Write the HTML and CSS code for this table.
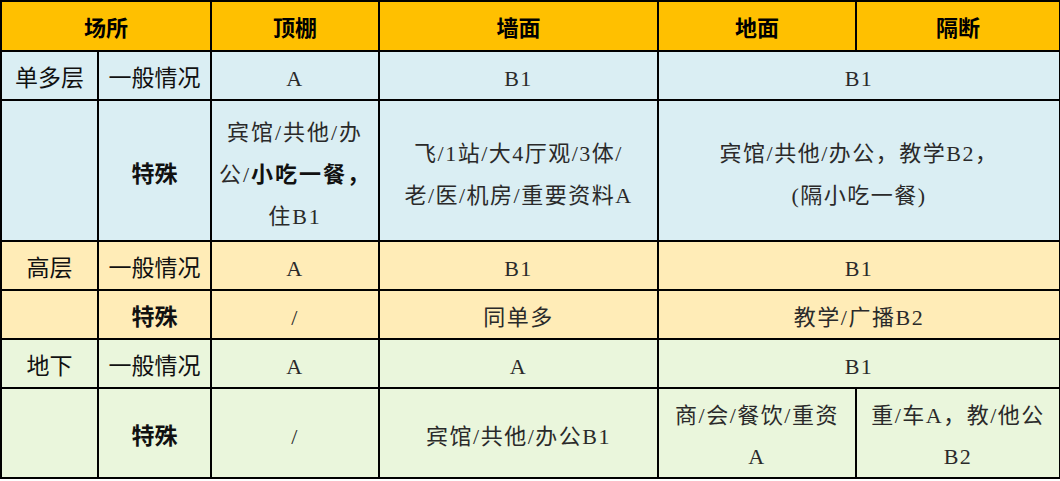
FILE: index.html
```html
<!DOCTYPE html>
<html lang="zh-CN">
<head>
<meta charset="utf-8">
<title>装修材料燃烧性能等级</title>
<link rel="stylesheet" href="styles.css">
</head>
<body>
<table class="grid">
  <colgroup>
    <col class="c1"><col class="c2"><col class="c3"><col class="c4"><col class="c5"><col class="c6">
  </colgroup>
  <thead>
    <tr class="head">
      <th colspan="2">场所</th>
      <th>顶棚</th>
      <th>墙面</th>
      <th>地面</th>
      <th>隔断</th>
    </tr>
  </thead>
  <tbody>
    <tr class="blue r-short">
      <td class="label">单多层</td>
      <td class="label">一般情况</td>
      <td>A</td>
      <td>B1</td>
      <td colspan="2">B1</td>
    </tr>
    <tr class="blue r-tall">
      <td></td>
      <td class="label bold">特殊</td>
      <td class="spread">宾馆/共他/办<br>公/<b>小吃一餐，</b><br>住B1</td>
      <td>飞/1站/大4厅观/3体/<br>老/医/机房/重要资料A</td>
      <td colspan="2">宾馆/共他/办公，教学B2，<br>(隔小吃一餐)</td>
    </tr>
    <tr class="yellow r-short">
      <td class="label">高层</td>
      <td class="label">一般情况</td>
      <td>A</td>
      <td>B1</td>
      <td colspan="2">B1</td>
    </tr>
    <tr class="yellow r-short">
      <td></td>
      <td class="label bold">特殊</td>
      <td>/</td>
      <td>同单多</td>
      <td colspan="2">教学/广播B2</td>
    </tr>
    <tr class="green r-short">
      <td class="label">地下</td>
      <td class="label">一般情况</td>
      <td>A</td>
      <td>A</td>
      <td colspan="2">B1</td>
    </tr>
    <tr class="green r-mid">
      <td></td>
      <td class="label bold">特殊</td>
      <td>/</td>
      <td>宾馆/共他/办公B1</td>
      <td>商/会/餐饮/重资<br>A</td>
      <td>重/车A，教/他公<br>B2</td>
    </tr>
  </tbody>
</table>
</body>
</html>
```

FILE: styles.css
```css
html, body {
  margin: 0;
  padding: 0;
  background: #ffffff;
}

.grid {
  border-collapse: collapse;
  table-layout: fixed;
  width: 1059px;
  font-family: "Liberation Serif", "Noto Sans CJK SC", serif;
  font-size: 22px;
  color: #2a2a2a;
}

.c1 { width: 97px; }
.c2 { width: 113px; }
.c3 { width: 168px; }
.c4 { width: 279px; }
.c5 { width: 198px; }
.c6 { width: 204px; }

.grid th,
.grid td {
  border: 2px solid #000;
  padding: 6px 0 0 0;
  text-align: center;
  vertical-align: middle;
  line-height: 40px;
  overflow: hidden;
  white-space: nowrap;
  letter-spacing: 1.5px;
}

.head th { height: 42px; }
.r-short td { height: 41px; }

.grid .r-tall td {
  height: 131px;
  padding-top: 8px;
  line-height: 42px;
}

.grid .r-mid td {
  height: 82px;
  line-height: 41px;
}

.head th {
  background: #ffc000;
  color: #000;
  font-weight: bold;
  font-size: 22px;
  letter-spacing: 0;
}

.blue td { background: #daeef3; }
.yellow td { background: #ffecb7; }
.green td { background: #eaf6dc; }

.label {
  color: #111;
  font-size: 23px;
}

.grid .label {
  letter-spacing: 0;
}

.bold {
  font-weight: bold;
}

.grid .spread {
  letter-spacing: 2px;
}

.spread b {
  font-weight: bold;
  color: #111;
}
```
